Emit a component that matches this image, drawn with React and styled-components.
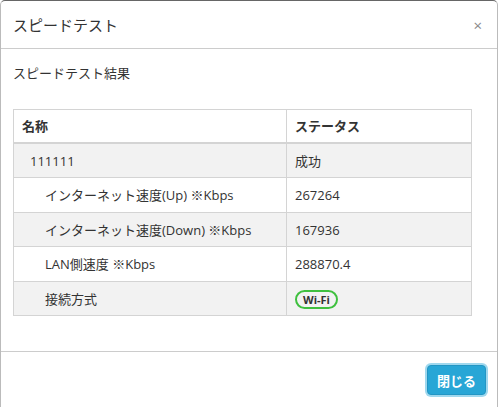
import React from 'react';
import styled, { createGlobalStyle } from 'styled-components';

const GlobalStyle = createGlobalStyle`
    html, body {
        margin: 0;
        padding: 0;
        background: #fff;
    }
    body {
        font-family: "Open Sans", "Noto Sans CJK JP", sans-serif;
        color: #333;
    }
`;

const rows = [
    { name: '111111', value: '成功', indent: 16 },
    { name: 'インターネット速度(Up) ※Kbps', value: '267264', indent: 31 },
    { name: 'インターネット速度(Down) ※Kbps', value: '167936', indent: 31 },
    { name: 'LAN側速度 ※Kbps', value: '288870.4', indent: 31 },
    { name: '接続方式', value: 'Wi-Fi', indent: 31, badge: true },
];

const App = () => {
    return (
        <>
            <GlobalStyle />
            <Modal>
                <Header>
                    <Title>スピードテスト</Title>
                    <Close>×</Close>
                </Header>
                <Body>
                    <Lead>スピードテスト結果</Lead>
                    <Table>
                        <thead>
                            <tr>
                                <Th $width={256}>名称</Th>
                                <Th>ステータス</Th>
                            </tr>
                        </thead>
                        <tbody>
                            {rows.map((r, i) => (
                                <Row key={i} $striped={i % 2 === 0}>
                                    <Td $indent={r.indent}>{r.name}</Td>
                                    <Td>
                                        {r.badge ? <Badge>{r.value}</Badge> : r.value}
                                    </Td>
                                </Row>
                            ))}
                        </tbody>
                    </Table>
                </Body>
                <Footer>
                    <Button>閉じる</Button>
                </Footer>
            </Modal>
        </>
    );
};

export default App;

const Modal = styled.div`
    width: 498px;
    height: 420px;
    box-sizing: border-box;
    border: 1px solid #bbb;
    border-top-color: #666;
    border-radius: 5px 5px 0 0;
    background: #fff;
`;

const Header = styled.div`
    height: 47px;
    border-bottom: 1px solid #ccc;
    display: flex;
    align-items: center;
    padding: 0 12px;
`;

const Title = styled.div`
    flex: 1;
    font-size: 15px;
    font-family: "Noto Sans CJK JP", sans-serif;
    color: #333;
`;

const Close = styled.div`
    font-size: 15px;
    color: #888;
    margin-right: 3px;
`;

const Body = styled.div`
    padding: 14px 12px 0;
    height: 288px;
    border-bottom: 1px solid #ccc;
`;

const Lead = styled.div`
    font-size: 13px;
    line-height: 20px;
    font-family: "Noto Sans CJK JP", sans-serif;
    margin-bottom: 26px;
`;

const Table = styled.table`
    width: 459px;
    border-collapse: collapse;
    font-size: 13px;
    font-family: "Open Sans", "Noto Sans CJK JP", sans-serif;
`;

const Th = styled.th`
    width: ${p => (p.$width ? `${p.$width}px` : 'auto')};
    text-align: left;
    font-weight: bold;
    padding: 6px 8px;
    line-height: 20px;
    border: 1px solid #d4d4d4;
    border-bottom: 2px solid #d4d4d4;
`;

const Row = styled.tr`
    background: ${p => (p.$striped ? '#f2f2f2' : '#fff')};
`;

const Td = styled.td`
    padding: 7px 8px 6.4px;
    padding-left: ${p => p.$indent || 8}px;
    line-height: 20px;
    border: 1px solid #d4d4d4;
`;

const Badge = styled.span`
    display: inline-block;
    font-size: 11px;
    font-weight: bold;
    line-height: 13px;
    padding: 1px 6px;
    border: 2px solid #3fc03f;
    border-radius: 10px;
    color: #333;
`;

const Footer = styled.div`
    display: flex;
    justify-content: flex-end;
    padding: 13px 11px;
`;

const Button = styled.button`
    height: 30px;
    padding: 0 9px;
    background: #28a6d6;
    border: 1px solid #2396c4;
    border-radius: 4px;
    color: #fff;
    font-size: 13px;
    font-weight: bold;
    font-family: "Noto Sans CJK JP", sans-serif;
    box-shadow: 0 0 0 2px #9fd8ee;
`;
